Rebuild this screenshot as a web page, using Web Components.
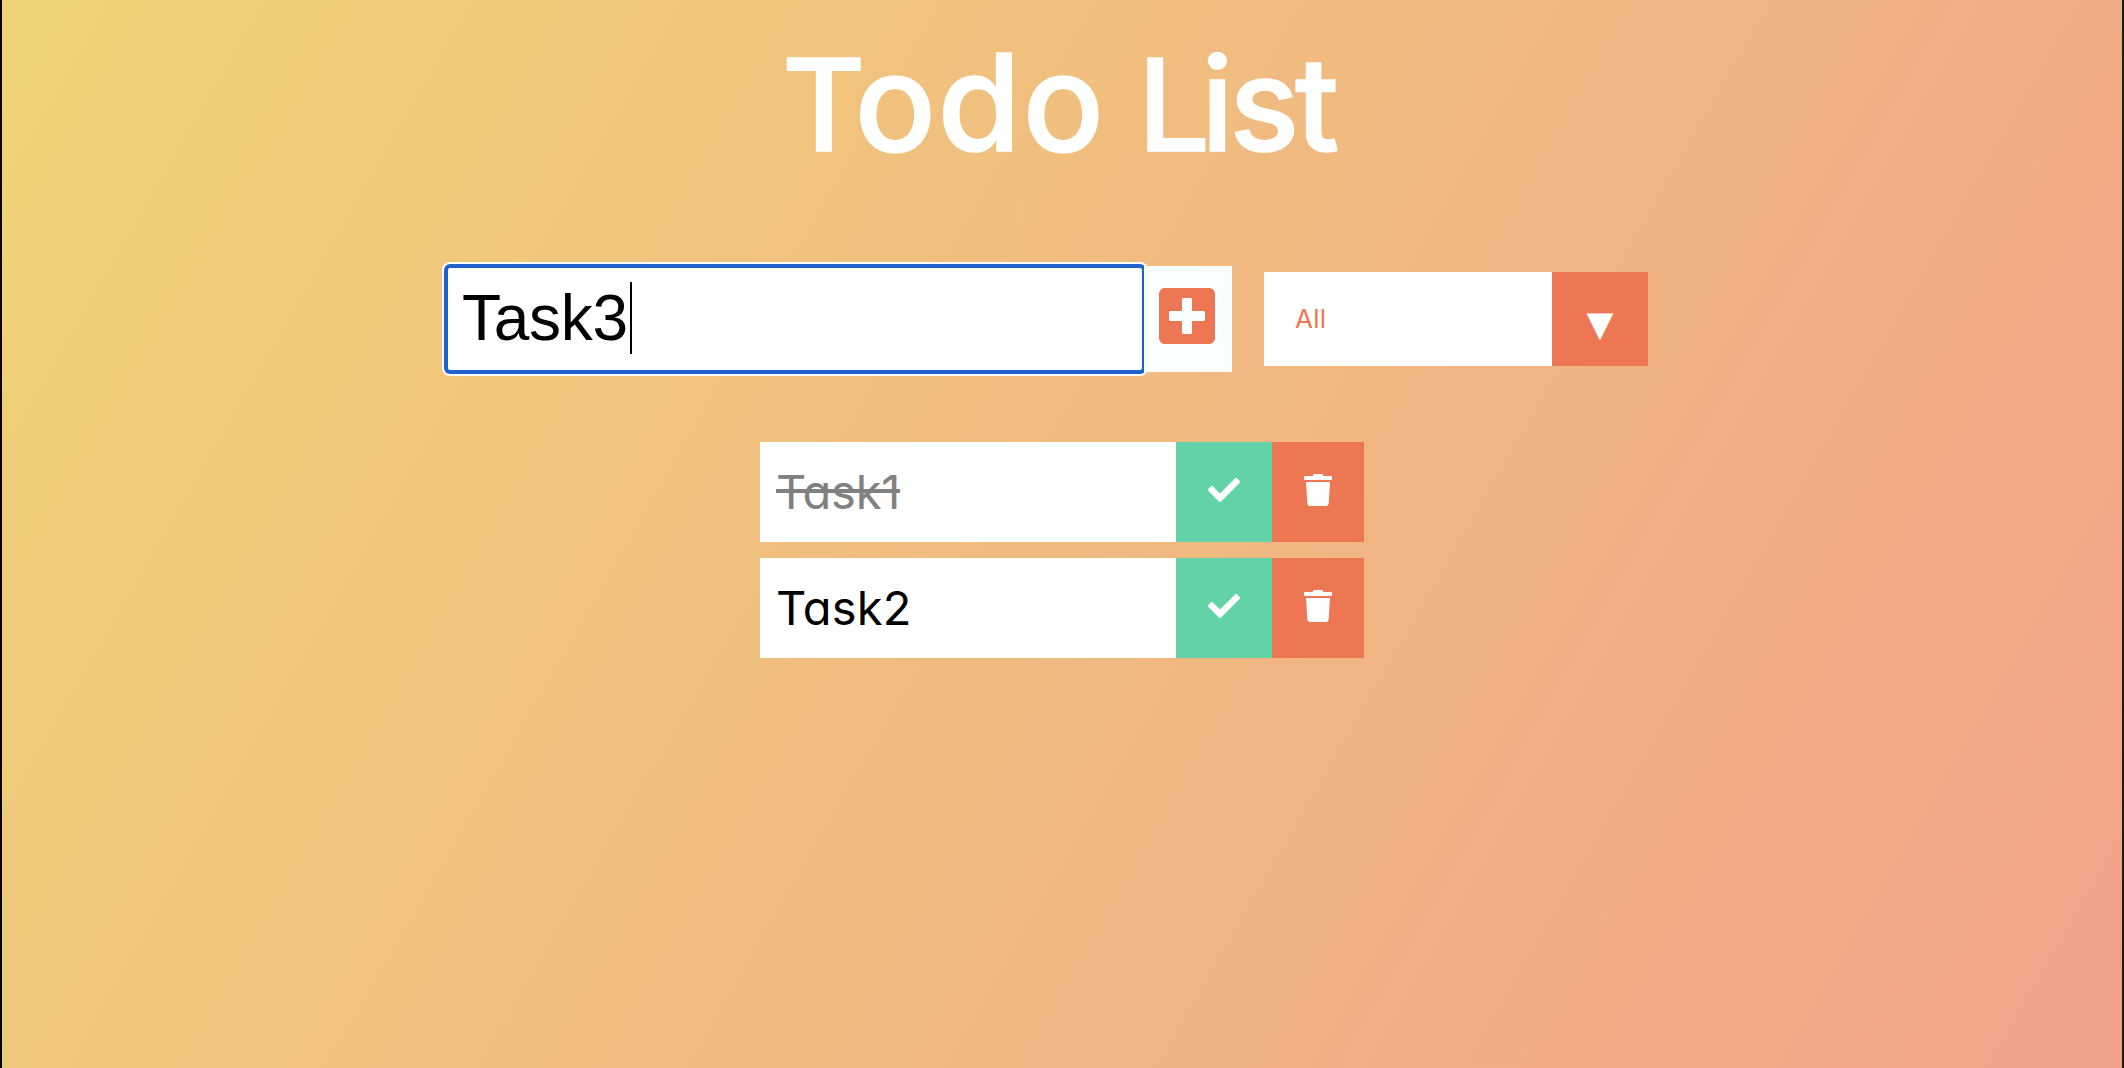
<!DOCTYPE html>
<html lang="en">
<head>
<meta charset="utf-8">
<title>Todo List</title>
<style>
html,body{margin:0;height:100%;overflow:hidden}
body{font-family:Inter,"Open Sans",sans-serif;--coral:#ed7752;--mint:#62d2a7}
.t{letter-spacing:-11px}
.odo{font-size:135px;letter-spacing:1.5px}
.l{letter-spacing:-9px}
.ist{font-size:130px;letter-spacing:-4.5px}
</style>
</head>
<body>
<todo-app>
  <todo-title><span class="t">T</span><span class="odo">odo</span> <span class="l">L</span><span class="ist">ist</span></todo-title>
  <todo-form value="Task3"></todo-form>
  <todo-filter>All</todo-filter>
  <todo-item slot="items" done>Task1</todo-item>
  <todo-item slot="items">Task2</todo-item>
</todo-app>
<script>
const define = (name, html) => {
  const t = document.createElement('template');
  t.innerHTML = html;
  customElements.define(name, class extends HTMLElement {
    constructor() {
      super();
      this.attachShadow({mode: 'open'}).append(t.content.cloneNode(true));
    }
    connectedCallback() {
      const v = this.shadowRoot.querySelector('.value');
      if (v) v.textContent = this.getAttribute('value');
      if (name === 'todo-title') this.slot = 'title';
      if (name === 'todo-form' || name === 'todo-filter') this.slot = 'controls';
    }
  });
};

define('todo-title', `<style>
  :host{display:block;height:266px;box-sizing:border-box;padding:25px 0 0 780px;color:#fff;font-size:128px;line-height:155px;font-weight:500;-webkit-text-stroke:1.6px #fff;word-spacing:-2px;white-space:nowrap}
</style><slot></slot>`);

define('todo-form', `<style>
  :host{display:flex;width:786px;height:106px}
  .field{flex:none;width:698px;height:106px;box-sizing:border-box;border:2px solid #2161cb;border-radius:4px;background:#fff;box-shadow:0 0 0 2px #2161cb,0 0 0 4px #fff;
    display:flex;align-items:center;padding-left:14px;color:#000;font:64px/72px "Liberation Sans",Arial,sans-serif}
  .value{margin-top:-2px;letter-spacing:-.3px}
  .caret{width:2px;height:72px;background:#000;margin:-2px 0 0 2.500px}
  .add{position:relative;flex:none;width:88px;height:106px;background:#f9fffe;display:flex;justify-content:center;box-sizing:border-box;padding-top:18px}
  svg{width:56px;height:64px;fill:var(--coral);margin-right:2px}
</style>
<div class="field"><span class="value"></span><i class="caret"></i></div>
<div class="add"><svg viewBox="0 0 448 512"><path d="M400 32H48C21.500 32 0 53.500 0 80v352c0 26.500 21.500 48 48 48h352c26.500 0 48-21.500 48-48V80c0-26.500-21.500-48-48-48zm-32 252c0 6.600-5.400 12-12 12h-92v92c0 6.600-5.400 12-12 12h-56c-6.600 0-12-5.400-12-12v-92H92c-6.600 0-12-5.400-12-12v-56c0-6.600 5.400-12 12-12h92v-92c0-6.600 5.400-12 12-12h56c6.600 0 12 5.400 12 12v92h92c6.600 0 12 5.400 12 12v56z"/></svg></div>`);

define('todo-filter', `<style>
  :host{display:flex;width:384px;height:94px;margin-top:6px}
  .label{width:288px;box-sizing:border-box;padding-left:31px;background:#fff;color:var(--coral);font-size:26px;line-height:94px;letter-spacing:.2px}
  .arrow{width:96px;background:var(--coral);color:#fff;font:35px/94px "DejaVu Sans",sans-serif;text-align:center}
  .arrow span{display:block;padding-top:5px;height:89px}
</style><div class="label"><slot></slot></div><div class="arrow"><span>▼</span></div>`);

define('todo-item', `<style>
  :host{display:flex;width:604px;height:100px;color:#000}
  .text{width:416px;box-sizing:border-box;padding:0 0 0 16px;background:#fff;font-size:47px;line-height:100px;letter-spacing:.2px;font-feature-settings:"cv11"}
  :host([done]) .text{color:#808080;letter-spacing:-.2px}
  :host([done]) .text span{background:linear-gradient(#808080,#808080) 0 26px/100% 4px no-repeat}
  .done,.trash{display:flex;justify-content:center;align-items:flex-start;box-sizing:border-box;padding-top:32px}
  .done{width:96px;background:var(--mint)}
  .trash{width:92px;background:var(--coral)}
  svg{height:32px;fill:#fff}
</style>
<div class="text"><span><slot></slot></span></div>
<div class="done"><svg width="32" viewBox="0 0 512 512"><path d="M173.898 439.404l-166.400-166.400c-9.997-9.997-9.997-26.206 0-36.204l36.203-36.204c9.997-9.998 26.207-9.998 36.204 0L192 312.690 432.095 72.596c9.997-9.997 26.207-9.997 36.204 0l36.203 36.204c9.997 9.997 9.997 26.206 0 36.204l-294.400 294.401c-9.998 9.997-26.207 9.997-36.204-.001z"/></svg></div>
<div class="trash"><svg width="28" viewBox="0 0 448 512"><path d="M432 32H312l-9.400-18.700A24 24 0 0 0 281.100 0H166.800a23.720 23.720 0 0 0-21.400 13.300L136 32H16A16 16 0 0 0 0 48v32a16 16 0 0 0 16 16h416a16 16 0 0 0 16-16V48a16 16 0 0 0-16-16zM53.200 467a48 48 0 0 0 47.900 45h245.800a48 48 0 0 0 47.900-45L416 128H32z"/></svg></div>`);

define('todo-app', `<style>
  :host{display:block;height:1068px;box-sizing:border-box;border-left:2px solid #050505;border-right:2px solid #1b1918;background:linear-gradient(120deg,#f0d377,#f1a28a)}
  .controls{display:flex;gap:32px;padding-left:444px;height:176px}
  .items{display:flex;flex-direction:column;gap:16px;padding-left:758px}
</style>
<slot name="title"></slot>
<div class="controls"><slot name="controls"></slot></div>
<div class="items"><slot name="items"></slot></div>`);
</script>
</body>
</html>
